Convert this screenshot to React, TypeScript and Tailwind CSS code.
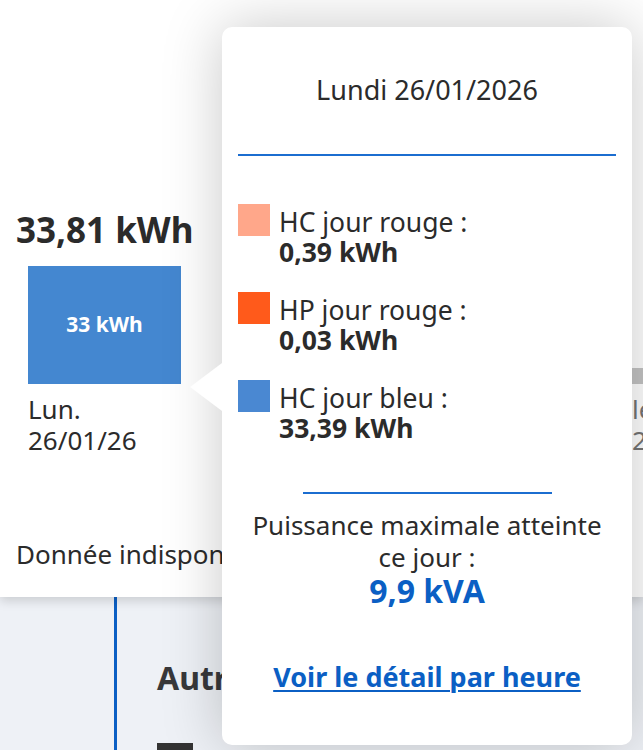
import React from "react";

const legend = [
	{ label: "HC jour rouge :", value: "0,39 kWh", color: "bg-[#ffa78a]" },
	{ label: "HP jour rouge :", value: "0,03 kWh", color: "bg-[#ff5a1b]" },
	{ label: "HC jour bleu :", value: "33,39 kWh", color: "bg-[#4a88d2]" },
];

const Tooltip = () => {
	return (
		<div className="absolute left-[222px] top-[27px] w-[410px] h-[718px] bg-white rounded-[10px] shadow-[0_0_60px_rgba(0,0,0,0.22)] px-4 pt-[47px] text-[#2b2b2b]">
			<div className="absolute left-[-32px] top-[336px] w-0 h-0 border-y-[24px] border-y-transparent border-r-[32px] border-r-white" />
			<p className="text-center text-[27px] leading-[32px]">Lundi 26/01/2026</p>
			<div className="mt-[48px] h-[2px] bg-[#1b6dd0]" />
			<div className="mt-[48px] flex flex-col gap-[25px]">
				{legend.map((item) => (
					<div key={item.label} className="flex items-start gap-[9px]">
						<div className={`w-[32px] h-[32px] shrink-0 ${item.color}`} />
						<div className="mt-[3px] text-[26.5px] leading-[30px]">
							<p>{item.label}</p>
							<p className="font-bold">{item.value}</p>
						</div>
					</div>
				))}
			</div>
			<div className="mx-auto mt-[49px] w-[249px] h-[2px] bg-[#1b6dd0]" />
			<div className="mt-[15px] text-center">
				<p className="text-[26px] leading-[32px]">
					Puissance maximale atteinte
					<br />
					ce jour :
				</p>
				<p className="text-[32px] leading-[36px] font-bold text-[#0b5fc4]">9,9 kVA</p>
			</div>
			<div className="mt-[52px] text-center">
				<a href="#" className="text-[27px] leading-[32px] font-bold text-[#0b5fc4] underline underline-offset-[3px] decoration-2">
					Voir le détail par heure
				</a>
			</div>
		</div>
	);
};

export default function App() {
	return (
		<div
			className="relative w-[643px] h-[750px] overflow-hidden bg-[#eef1f6] text-[#2b2b2b]"
			style={{ fontFamily: '"Noto Sans", "Open Sans", sans-serif' }}
		>
			<div className="relative h-[597px] bg-white shadow-[0_4px_10px_rgba(0,0,0,0.15)] overflow-hidden">
				<div className="flex items-end gap-[451px] pl-[28px] pt-[210px]">
					<div className="flex flex-col w-[153px] shrink-0">
						<p className="-ml-3 text-[35px] leading-[40px] font-bold whitespace-nowrap">33,81 kWh</p>
						<div className="mt-[16px] h-[118px] bg-[#4487d0] flex items-center justify-center">
							<span className="text-white text-[21px] font-bold">33 kWh</span>
						</div>
						<p className="mt-[10px] text-[26px] leading-[31px]">
							Lun.
							<br />
							26/01/26
						</p>
					</div>
					<div className="flex flex-col w-[153px] shrink-0">
						<div className="h-[16px] bg-[#c4c4c4]" />
						<p className="mt-[10px] text-[26px] leading-[31px] text-[#757575] whitespace-nowrap">
							le
							<br />
							27/01/26
						</p>
					</div>
				</div>
				<p className="mt-[82px] pl-4 text-[26px] leading-[32px] whitespace-nowrap">Donnée indisponible</p>
			</div>
			<div className="ml-[114px] h-[153px] border-l-[3px] border-[#0b5fc4] pl-[40px] pt-[63px]">
				<h2 className="text-[32px] leading-[36px] font-bold text-[#38383a]">Autres données</h2>
				<div className="mt-[47px] w-[36px] h-[12px] bg-[#333]" />
			</div>
			<Tooltip />
		</div>
	);
}
